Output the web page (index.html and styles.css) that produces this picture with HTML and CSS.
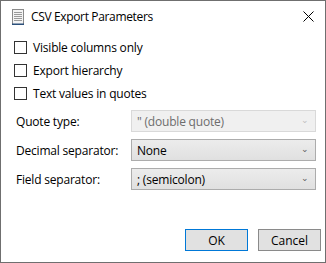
FILE: index.html
```html
<!DOCTYPE html>
<html lang="en">
<head>
    <meta charset="UTF-8">
    <title>CSV Export Parameters</title>
    <link rel="stylesheet" href="styles.css">
</head>
<body>
    <div class="window">
        <div class="title-bar">
            <svg class="app-icon" width="12" height="16" viewBox="0 0 12 16">
                <rect x="0.5" y="0.5" width="11" height="15" fill="#f4f4f4" stroke="#8a8a8a"/>
                <rect x="2" y="3" width="8" height="1" fill="#9a9a9a"/>
                <rect x="2" y="5" width="8" height="1" fill="#9a9a9a"/>
                <rect x="2" y="7" width="8" height="1" fill="#9a9a9a"/>
                <rect x="2" y="9" width="8" height="1" fill="#9a9a9a"/>
                <rect x="2" y="11" width="8" height="1" fill="#9a9a9a"/>
                <rect x="0" y="14.5" width="12" height="1.5" fill="#2b4f7a"/>
            </svg>
            <span class="title">CSV Export Parameters</span>
            <svg class="close" width="11" height="11" viewBox="0 0 11 11">
                <path d="M0.5 0.5 L10.5 10.5 M10.5 0.5 L0.5 10.5" stroke="#000" stroke-width="1"/>
            </svg>
        </div>

        <div class="content">
            <div class="checks">
                <label class="check"><span class="box"></span>Visible columns only</label>
                <label class="check"><span class="box"></span>Export hierarchy</label>
                <label class="check"><span class="box"></span>Text values in quotes</label>
            </div>

            <div class="form">
                <span class="field-label">Quote type:</span>
                <div class="select disabled"><span>" (double quote)</span><span class="arrow">&#8964;</span></div>
                <span class="field-label">Decimal separator:</span>
                <div class="select"><span>None</span><span class="arrow">&#8964;</span></div>
                <span class="field-label">Field separator:</span>
                <div class="select"><span>; (semicolon)</span><span class="arrow">&#8964;</span></div>
            </div>

            <div class="buttons">
                <button class="btn default">OK</button>
                <button class="btn">Cancel</button>
            </div>
        </div>
    </div>
</body>
</html>
```

FILE: styles.css
```css
* {
    margin: 0;
    padding: 0;
    box-sizing: border-box;
}

body {
    font-family: "Open Sans", "Noto Sans", Arial, sans-serif;
    font-size: 12px;
    color: #000;
    background: #fff;
}

.window {
    width: 326px;
    height: 263px;
    border: 1px solid #6f6f6f;
    display: flex;
    flex-direction: column;
}

.title-bar {
    height: 30px;
    display: flex;
    align-items: center;
    padding: 0 10px 0 11px;
}

.app-icon {
    margin-top: 1px;
}

.title {
    margin-left: 7px;
    flex: 1;
    letter-spacing: -0.35px;
}

.close {
    margin-right: 1px;
}

.content {
    flex: 1;
    padding: 8px 9px 0 13px;
    display: flex;
    flex-direction: column;
}

.checks {
    display: flex;
    flex-direction: column;
    gap: 6px;
}

.check {
    display: flex;
    align-items: center;
    height: 17px;
    gap: 6px;
    letter-spacing: -0.2px;
}

.box {
    width: 13px;
    height: 13px;
    border: 1px solid #333;
    background: #fff;
}

.form {
    margin-top: 8px;
    display: grid;
    grid-template-columns: 117px 185px;
    row-gap: 7px;
    align-items: center;
}

.field-label {
    padding-left: 2px;
    letter-spacing: -0.2px;
}

.select {
    height: 22px;
    border: 1px solid #acacac;
    background: linear-gradient(#ececec, #e0e0e0);
    display: flex;
    align-items: center;
    justify-content: space-between;
    padding: 0 6px 0 5px;
    letter-spacing: -0.2px;
}

.select.disabled {
    background: #f0f0f0;
    border-color: #d9d9d9;
    color: #6d6d6d;
}

.arrow {
    font-size: 9px;
    color: #606060;
    line-height: 1;
    margin-top: -4px;
}

.select.disabled .arrow {
    color: #bfbfbf;
}

.buttons {
    margin-top: auto;
    margin-bottom: 11px;
    margin-right: -5px;
    display: flex;
    justify-content: flex-end;
    gap: 10px;
}

.btn {
    width: 63px;
    height: 22px;
    border: 1px solid #8a8a8a;
    background: #e1e1e1;
    font-family: inherit;
    font-size: 12px;
    color: #000;
}

.btn.default {
    border: 1px solid #0078d7;
}
```
